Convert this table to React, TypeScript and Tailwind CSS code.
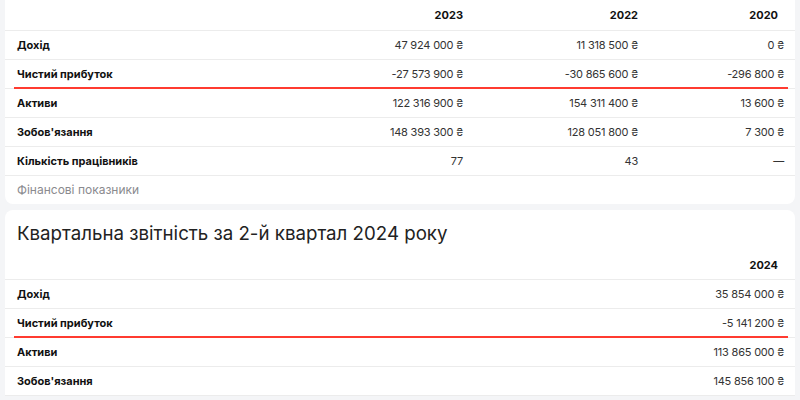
import React from "react";

type Row = { label: string; values: string[]; red?: boolean };

const top: Row[] = [
  { label: "Дохід", values: ["47 924 000 ₴", "11 318 500 ₴", "0 ₴"] },
  { label: "Чистий прибуток", values: ["-27 573 900 ₴", "-30 865 600 ₴", "-296 800 ₴"], red: true },
  { label: "Активи", values: ["122 316 900 ₴", "154 311 400 ₴", "13 600 ₴"] },
  { label: "Зобов'язання", values: ["148 393 300 ₴", "128 051 800 ₴", "7 300 ₴"] },
  { label: "Кількість працівників", values: ["77", "43", "—"] },
];

const bottom: Row[] = [
  { label: "Дохід", values: ["35 854 000 ₴"] },
  { label: "Чистий прибуток", values: ["-5 141 200 ₴"], red: true },
  { label: "Активи", values: ["113 865 000 ₴"] },
  { label: "Зобов'язання", values: ["145 856 100 ₴"] },
];

function RedLine() {
  return <div className="absolute bottom-[-1px] left-[9px] right-[7px] h-[2px] bg-[#ff3b30]" />;
}

const val = "text-right text-[11px] tracking-[-0.2px] text-[#333]";
const lab = "pl-[12px] font-bold text-[11px] text-[#111]";

export default function App() {
  return (
    <div
      className="w-[800px] h-[400px] overflow-hidden bg-[#f4f5f7] px-[5px]"
      style={{ fontFamily: "Inter, 'Noto Sans', sans-serif" }}
    >
      {/* Top card */}
      <div className="bg-white rounded-b-lg">
        <div className="grid grid-cols-[285px_178px_175px_152px] h-[31px] items-center border-b border-[#ececec] text-[11px] font-bold text-[#111]">
          <div />
          <div className="text-right pr-[5px]">2023</div>
          <div className="text-right pr-[5px]">2022</div>
          <div className="text-right pr-[17px]">2020</div>
        </div>
        {top.map((r) => (
          <div
            key={r.label}
            className="relative grid grid-cols-[285px_178px_175px_152px] h-[29px] items-center border-b border-[#ececec]"
          >
            <div className={lab}>{r.label}</div>
            <div className={`${val} pr-[5px]`}>{r.values[0]}</div>
            <div className={`${val} pr-[5px]`}>{r.values[1]}</div>
            <div className={`${val} pr-[11px]`}>{r.values[2]}</div>
            {r.red && <RedLine />}
          </div>
        ))}
        <div className="h-[28px] flex items-center pl-[12px] text-[12px] text-[#8a8a8e]">Фінансові показники</div>
      </div>

      {/* Bottom card */}
      <div className="mt-[6px] bg-white rounded-t-lg">
        <div className="h-[44px] flex items-center pl-[12px] pt-[4px] text-[18.7px] text-[#222]">
          Квартальна звітність за 2-й квартал 2024 року
        </div>
        <div className="grid grid-cols-[1fr_200px] h-[26px] items-center pb-[3px] border-b border-[#ececec] text-[11px] font-bold text-[#111]">
          <div />
          <div className="text-right pr-[17px]">2024</div>
        </div>
        {bottom.map((r) => (
          <div
            key={r.label}
            className="relative grid grid-cols-[1fr_200px] h-[29px] items-center border-b border-[#ececec]"
          >
            <div className={lab}>{r.label}</div>
            <div className={`${val} pr-[11px]`}>{r.values[0]}</div>
            {r.red && <RedLine />}
          </div>
        ))}
      </div>
    </div>
  );
}
